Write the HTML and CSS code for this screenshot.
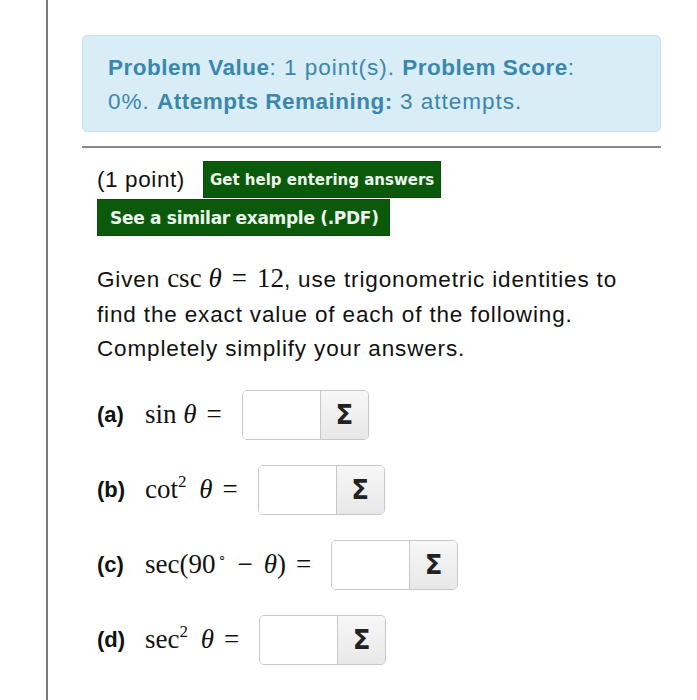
FILE: index.html
```html
<!DOCTYPE html>
<html>
<head>
<meta charset="utf-8">
<link rel="stylesheet" href="styles.css">
</head>
<body>
<div class="page">
  <div class="rail"></div>
  <div class="content">
    <div class="alert">
      <b>Problem Value</b>: 1 point(s). <b>Problem Score</b>:<br>
      0%. <b>Attempts Remaining:</b> 3 attempts.
    </div>
    <div class="rule"></div>
    <div class="problem">
      <div class="head">
        <span class="points">(1 point)</span>
        <span class="btn btn-help">Get help entering answers</span>
      </div>
      <div class="btn btn-example">See a similar example (.PDF)</div>
      <p class="text">Given <span class="m">csc <i>θ</i><span class="eq">=</span>12</span>, use trigonometric identities to<br>find the exact value of each of the following.<br>Completely simplify your answers.</p>
      <div class="parts">
        <div class="part">
          <span class="lbl">(a)</span>
          <span class="m">sin <i>θ</i><span class="eq">=</span></span>
          <span class="ans"><span class="field"></span><span class="sigma">Σ</span></span>
        </div>
        <div class="part">
          <span class="lbl">(b)</span>
          <span class="m">cot<sup>2</sup> <i>θ</i><span class="eq">=</span></span>
          <span class="ans"><span class="field"></span><span class="sigma">Σ</span></span>
        </div>
        <div class="part">
          <span class="lbl">(c)</span>
          <span class="m">sec(90<sup class="deg">∘</sup><span class="op">−</span><i>θ</i>)<span class="eq">=</span></span>
          <span class="ans"><span class="field"></span><span class="sigma">Σ</span></span>
        </div>
        <div class="part">
          <span class="lbl">(d)</span>
          <span class="m">sec<sup>2</sup> <i>θ</i><span class="eq">=</span></span>
          <span class="ans"><span class="field"></span><span class="sigma">Σ</span></span>
        </div>
      </div>
    </div>
  </div>
</div>
</body>
</html>
```

FILE: styles.css
```css
html, body {
  margin: 0;
  padding: 0;
  background: #fff;
}
body {
  font-family: "Liberation Sans", Arial, sans-serif;
  color: #111;
}
.page {
  display: flex;
  height: 700px;
  overflow: hidden;
}
.rail {
  width: 2px;
  margin-left: 46px;
  background: #7a7a7a;
  height: 700px;
  flex: none;
}
.content {
  margin-left: 34px;
  width: 579px;
  flex: none;
}
.alert {
  margin-top: 35px;
  box-sizing: border-box;
  height: 97px;
  padding: 15px 10px 0 25px;
  background: #d9edf7;
  border: 1px solid #c4e3ef;
  border-radius: 5px;
  color: #3a87ad;
  font-size: 22.5px;
  line-height: 34px;
  letter-spacing: 1px;
  white-space: nowrap;
}
.alert b {
  font-weight: bold;
  letter-spacing: 0.5px;
}
.rule {
  margin-top: 14px;
  height: 2px;
  background: #8a8a8a;
}
.problem {
  padding-left: 15px;
}
.head {
  display: flex;
  align-items: center;
  margin-top: 13px;
  height: 37px;
}
.points {
  font-size: 22.5px;
  letter-spacing: 0.6px;
  margin-right: 18px;
}
.btn {
  box-sizing: border-box;
  background: #0b5a0b;
  color: #eef6ee;
  font-family: "DejaVu Sans", sans-serif;
  font-weight: bold;
  display: inline-flex;
  align-items: center;
  height: 37px;
  border: 1px solid #0a4a0a;
  white-space: nowrap;
}
.btn-help {
  width: 238px;
  font-size: 15px;
  padding-left: 6px;
  letter-spacing: 0;
}
.btn-example {
  width: 293px;
  font-size: 17px;
  padding-left: 12px;
  margin-top: 1px;
  letter-spacing: -0.3px;
  display: flex;
}
.text {
  margin: 25px 0 0 0;
  font-size: 22.5px;
  letter-spacing: 0.85px;
  line-height: 34.5px;
  white-space: nowrap;
}
.m {
  font-family: "Liberation Serif", "Times New Roman", serif;
  font-size: 27px;
  letter-spacing: 0;
  color: #111;
  white-space: nowrap;
}
.m i {
  font-style: italic;
}
.eq {
  margin: 0 10px;
}
.op {
  margin: 0 11px;
}
.m sup {
  font-size: 17px;
  vertical-align: 11px;
  line-height: 0;
  margin-right: 6px;
}
.m sup.deg {
  font-size: 13px;
  vertical-align: 12px;
  margin: 0 0 0 3px;
}
.parts {
  margin-top: 23px;
  display: flex;
  flex-direction: column;
  gap: 25px;
}
.part {
  display: flex;
  align-items: center;
  height: 50px;
}
.lbl {
  font-weight: bold;
  font-size: 22px;
  width: 48px;
  flex: none;
}
.ans {
  margin-left: 10px;
  display: flex;
  box-sizing: border-box;
  width: 127px;
  height: 50px;
  border: 1px solid #c8c8c8;
  border-radius: 5px;
  overflow: hidden;
  box-shadow: inset 0 1px 1px rgba(0,0,0,0.05);
}
.field {
  width: 77px;
  background: #fff;
  border-right: 1px solid #c8c8c8;
}
.sigma {
  flex: 1;
  background: linear-gradient(#f7f7f7, #e8e8e8);
  display: flex;
  align-items: center;
  justify-content: center;
  font-family: "DejaVu Sans", sans-serif;
  font-weight: bold;
  font-size: 26px;
  color: #222;
}
```
